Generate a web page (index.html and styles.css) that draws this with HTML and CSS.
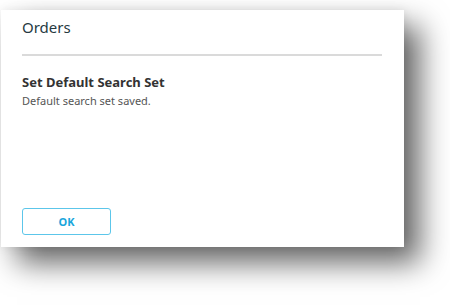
FILE: index.html
```html
<!DOCTYPE html>
<html lang="en">
<head>
    <meta charset="UTF-8">
    <title>Orders</title>
    <link rel="stylesheet" href="styles.css">
</head>
<body>
    <div class="dialog">
        <div class="dialog-header">
            <h1>Orders</h1>
        </div>
        <div class="dialog-body">
            <h2>Set Default Search Set</h2>
            <p>Default search set saved.</p>
        </div>
        <div class="dialog-footer">
            <button class="btn">OK</button>
        </div>
    </div>
</body>
</html>
```

FILE: styles.css
```css
html, body {
    height: 100%;
}
body {
    margin: 0;
    min-height: 306px;
    background: #fff;
    font-family: "Noto Sans", "Open Sans", sans-serif;
    overflow: hidden;
}
.dialog {
    margin: 10px 0 0 1px;
    width: 403px;
    height: 237px;
    background: #fff;
    display: flex;
    flex-direction: column;
    box-shadow: 16px 16px 28px rgba(0,0,0,0.6), 0 0 10px rgba(0,0,0,0.08);
}
.dialog-header {
    margin: 0 22px 0 21px;
    padding: 6px 0 16px;
    border-bottom: 2px solid #dadada;
}
h1 {
    margin: 0;
    font-size: 15px;
    line-height: 22px;
    font-weight: normal;
    color: #263a42;
}
.dialog-body {
    padding: 16px 21px 0;
    flex: 1;
}
h2 {
    margin: 0;
    font-size: 13px;
    line-height: 20px;
    font-weight: bold;
    color: #333;
}
p {
    margin: 1px 0 0;
    font-size: 11px;
    color: #555;
}
.dialog-footer {
    padding: 0 21px 12px;
}
.btn {
    width: 89px;
    height: 27px;
    background: #fff;
    border: 1px solid #5cc6ea;
    border-radius: 3px;
    color: #1aa6dc;
    font-family: inherit;
    font-size: 11px;
    font-weight: bold;
}
```
